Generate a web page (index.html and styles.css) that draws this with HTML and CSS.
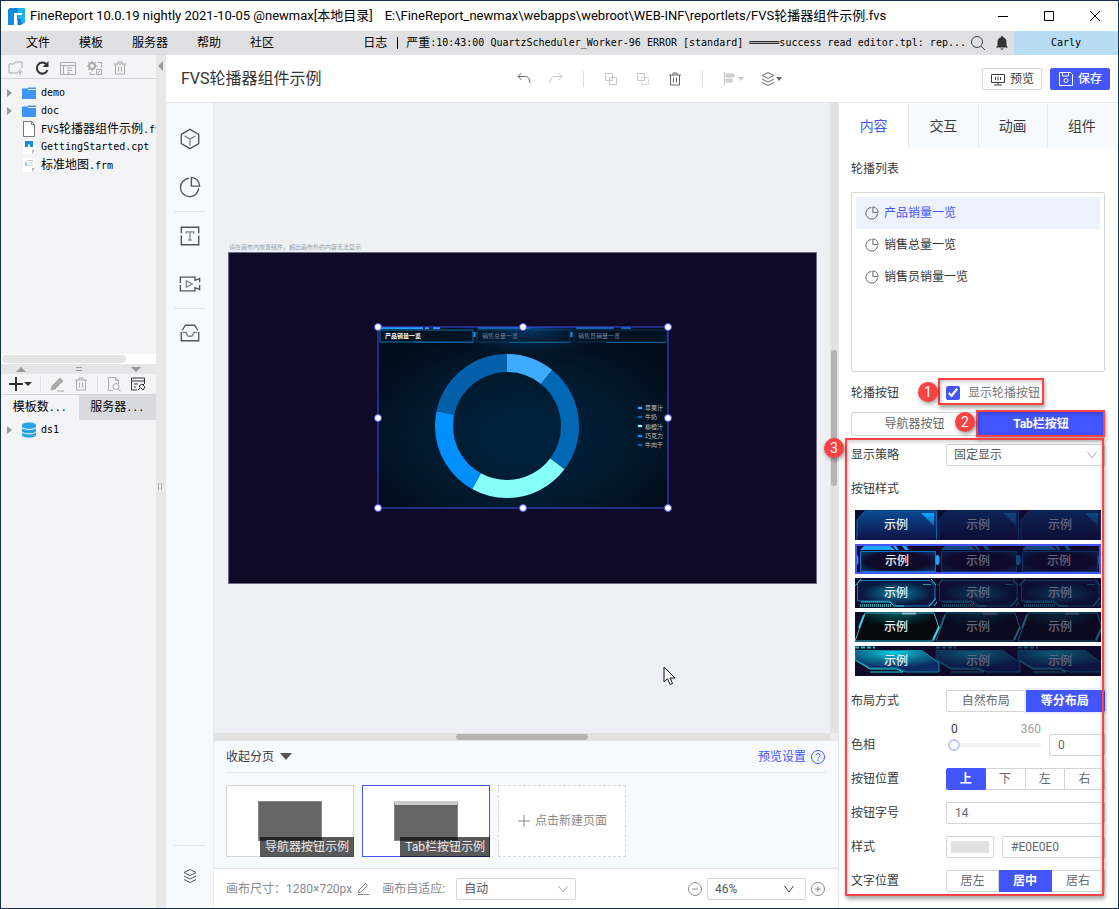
FILE: index.html
```html
<!DOCTYPE html>
<html lang="zh-CN">
<head>
<meta charset="utf-8">
<meta name="viewport" content="width=device-width, initial-scale=1">
<title>FineReport - FVS轮播器组件示例</title>
<link rel="stylesheet" href="styles.css">
</head>
<body>
<svg class="defs" width="0" height="0" aria-hidden="true">
  <defs>
    <linearGradient id="g1" x1="0" y1="0" x2="0" y2="1"><stop offset="0" stop-color="#0a4a92"/><stop offset="1" stop-color="#0d1245"/></linearGradient>
    <linearGradient id="g1t" x1="0" y1="0" x2="0" y2="1"><stop offset="0" stop-color="#0aa5ff"/><stop offset="1" stop-color="#0e60a8"/></linearGradient>
    <radialGradient id="g2" r="0.7"><stop offset="0.6" stop-color="#0f0a2a"/><stop offset="1" stop-color="#0d3d74"/></radialGradient>
    <radialGradient id="g3"><stop offset="0" stop-color="#0a7f9c"/><stop offset="0.9" stop-color="#0a1740"/></radialGradient>
    <radialGradient id="g4" cx="0.5" cy="0"><stop offset="0" stop-color="#02565c"/><stop offset="1" stop-color="#03090c"/></radialGradient>
    <radialGradient id="g5" cx="0.45" cy="0.1" r="0.7"><stop offset="0" stop-color="#06cfe2"/><stop offset="0.5" stop-color="#0a7896"/><stop offset="1" stop-color="#0c2a66"/></radialGradient>
    <radialGradient id="panelglow" cx="0.5" cy="0.6" r="0.6"><stop offset="0" stop-color="#01233f"/><stop offset="0.6" stop-color="#021a2e"/><stop offset="1" stop-color="#020d1c"/></radialGradient>
    <radialGradient id="topglow" cx="0.5" cy="0" r="0.5"><stop offset="0" stop-color="#0a5aa8" stop-opacity="0.8"/><stop offset="1" stop-color="#03233f" stop-opacity="0"/></radialGradient>
    <symbol id="pie" viewBox="0 0 24 24"><path d="M11 2.500A10 10 0 1 0 21.500 13.500M13.500 1.500v9.500h9A9.500 9.500 0 0 0 13.500 1.500z"/></symbol>
    <symbol id="chev" viewBox="0 0 12 8"><path d="M1.500 1L6 7l4.500-6"/></symbol>
    <symbol id="trash" viewBox="0 0 16 16"><path d="M2 4h12M6 4V2h4v2M3.500 4v10h9V4M6.500 6.500v5M9.500 6.500v5"/></symbol>
    <symbol id="layers" viewBox="0 0 16 16"><path d="M8 1.500l6 3-6 3-6-3zM2 8l6 3 6-3M2 11.500l6 3 6-3"/></symbol>
    <symbol id="folder" viewBox="0 0 16 14"><path d="M1 2.500h5l1.500-1H15v11.500H1z" fill="#3d96f7"/><path d="M7 3.500h8" stroke="#fff" fill="none"/></symbol>
    <symbol id="tab1" viewBox="0 0 82 30"><path d="M2 30V10L10 1h71.500v29" fill="url(#g1)" stroke="#0b68b4"/><path d="M66 3h13v13z" fill="url(#g1t)"/></symbol>
    <symbol id="tab2" viewBox="0 0 82 30" overflow="visible"><path d="M5 6l4-4h26l5 4zM38 2h3l3 4h-3zM47 2h4l3 4h-4z" fill="#1aa4ff"/><path d="M5.500 7.500h75v20h-75z" fill="url(#g2)" stroke="#0c73bd"/><ellipse cx="1.500" cy="16" rx="2" ry="5" fill="#1aa4ff"/><ellipse cx="82.500" cy="16" rx="2" ry="5" fill="#1aa4ff"/></symbol>
    <symbol id="tab3" viewBox="0 0 82 30"><path d="M2.500 5.500l3-3H75l5 5V22l-5 6H42l-7-5H2.500z" fill="url(#g3)" stroke="#1080b8"/><path d="M5 27.500h31" stroke="#14a5b0" stroke-width="3" stroke-dasharray="1 1" fill="none"/><path d="M0 8l6-7M76 1l5 6M74 28l7-8M79 28l3-4M6 24h29l4 4h10" stroke="#2fd5da" fill="none"/><path d="M68 6.500h8" stroke="#1c9aa8"/></symbol>
    <symbol id="tab4" viewBox="0 0 84 30" overflow="visible"><path d="M0 29L10 1h69l5 15-6 13z" fill="url(#g4)" stroke="#24c0d0"/><path d="M4 16L9 3M84 15l-6 13" stroke="#39d5de" stroke-width="2" fill="none"/><path d="M47 1.500h14" stroke="#8fb8c8" stroke-width="2"/></symbol>
    <symbol id="tab5" viewBox="0 0 84 30" overflow="visible"><path d="M0 4.500h67L84 17v9H51l-9-4H15L0 13z" fill="url(#g5)" stroke="#0a8da4"/><path d="M0 14l15 9h27l6 3H15" stroke="#1ad6de" fill="none"/><path d="M0 1.500h20" stroke="#16c5cc" stroke-width="2" stroke-dasharray="4 2"/></symbol>
  </defs>
</svg>

<div class="window">
  <header class="titlebar">
    <svg class="logo" viewBox="0 0 17 17"><path d="M2 0h14.500v14.500L13 17H9.500v-5H6v5H0V2z" fill="#0a7fdc"/><path d="M9.500 0H17v15h-4v-4H9.500z" fill="#1fb5e9"/><path d="M6 12V5h8v2H9v5z" fill="#fff"/><path d="M0 4L3 0h3v17H0z" fill="#118ee4"/></svg>
    <span class="app-name">FineReport 10.0.19 nightly 2021-10-05 @newmax[本地目录]</span>
    <span class="app-path">E:\FineReport_newmax\webapps\webroot\WEB-INF\reportlets/FVS轮播器组件示例.fvs</span>
    <div class="win-controls">
      <button aria-label="最小化"><svg viewBox="0 0 12 12"><path d="M1 6.500h10"/></svg></button>
      <button aria-label="最大化"><svg viewBox="0 0 12 12"><path d="M1.500 1.500h9v9h-9z"/></svg></button>
      <button aria-label="关闭"><svg viewBox="0 0 12 12"><path d="M1 1l10 10M11 1L1 11"/></svg></button>
    </div>
  </header>

  <nav class="menubar">
    <div class="menus"><button>文件</button><button>模板</button><button>服务器</button><button>帮助</button><button>社区</button></div>
    <div class="log"><span>日志</span><span class="bar"></span><span>严重</span><span class="mono">:10:43:00 QuartzScheduler_Worker-96 ERROR [standard] ═════success read editor.tpl: rep...</span></div>
    <button class="menu-icon" aria-label="搜索"><svg viewBox="0 0 16 16"><circle cx="7" cy="7" r="5.500"/><path d="M11 11l4 4"/></svg></button>
    <button class="menu-icon" aria-label="通知"><svg viewBox="0 0 16 16"><path d="M8 1c.8 0 1 .6 1 1.200 2.500.6 3.500 2.600 3.500 4.800v3.500L14 12.500H2L3.500 10.500V7c0-2.200 1-4.200 3.500-4.800C7 1.600 7.200 1 8 1zM6 13.500h4L8 15z" fill="#333" stroke="none"/></svg></button>
    <button class="user mono">Carly</button>
  </nav>

  <div class="workspace">
    <aside class="explorer">
      <div class="ex-tools">
        <button aria-label="新建文件夹"><svg viewBox="0 0 16 16"><path d="M10 13H1V4h5l1.500-2H14v6M12 9v6M9 12h6"/></svg></button>
        <button class="dark" aria-label="刷新"><svg viewBox="0 0 16 16"><path d="M12.500 4.500A5.500 5.500 0 1 0 13.500 10" stroke-width="2"/><path d="M14.500 1v6h-6z" fill="#333" stroke="none"/></svg></button>
        <button aria-label="重命名"><svg viewBox="0 0 16 16"><path d="M.5 2.500h15v12H.5zM.5 5.500h15M3.500 5.500v9M7 8h5M7 10.500h5M7 13h3"/></svg></button>
        <button aria-label="设置"><svg viewBox="0 0 16 16"><circle cx="6" cy="6" r="3" stroke-width="2"/><path d="M6 .5v2M6 9.500v2M.5 6h2M9.500 6h2M2 2l1.500 1.500M10 2L8.500 3.500M2 10l1.500-1.500M11.500 2.500h4v5M4 12v2.500h5M10.500 9.500h5v5h-5zM12 13l2-2"/></svg></button>
        <button aria-label="删除"><svg><use href="#trash"/></svg></button>
      </div>
      <ul class="tree files">
        <li class="branch"><i class="tri"></i><svg><use href="#folder"/></svg><span class="mono">demo</span></li>
        <li class="branch"><i class="tri"></i><svg><use href="#folder"/></svg><span class="mono">doc</span></li>
        <li><i></i><svg viewBox="0 0 16 16"><path d="M2.500.5h8l3 3v12h-11zM10.500.5v3h3" fill="#fff" stroke="#777"/></svg><span><span class="mono">FVS</span>轮播器组件示例<span class="mono">.fvs</span></span></li>
        <li><i></i><svg viewBox="0 0 16 16"><path d="M2 1h12v10l-3 4H2z" fill="#fff"/><path d="M11 15v-4h3z" fill="#bbb"/><path d="M4 2h8v6H9V5.500H7V8H4z" fill="#148ee0"/></svg><span class="mono">GettingStarted.cpt</span></li>
        <li><i></i><svg viewBox="0 0 16 16"><path d="M2 1h12v10l-3 4H2z" fill="#fff"/><path d="M11 15v-4h3z" fill="#bbb"/><path d="M5 5v4" stroke="#148ee0"/><path d="M6 3.500h6M7 6h5M7 8.500h5" stroke="#ccc"/></svg><span>标准地图<span class="mono">.frm</span></span></li>
      </ul>
      <div class="ex-scroll"><i></i></div>
      <div class="ex-split"><i class="up"></i><i class="eq"></i><i class="down"></i></div>
      <div class="ex-tools data">
        <button class="dark add" aria-label="添加"><svg viewBox="0 0 16 16"><path d="M8 1v14M1 8h14" stroke-width="2"/></svg><i class="caret"></i></button>
        <span class="vline"></span>
        <button aria-label="编辑"><svg viewBox="0 0 16 16"><path d="M2 14l1-4 8-8 3 3-8 8z" fill="#aaa"/><path d="M8 15h7"/></svg></button>
        <button aria-label="删除数据"><svg><use href="#trash"/></svg></button>
        <span class="vline"></span>
        <button aria-label="预览数据"><svg viewBox="0 0 16 16"><path d="M7 14.500H2.500v-13h7l3 3V8M9.500 1.500v3h3"/><circle cx="10" cy="10.500" r="3"/><path d="M12 13l2.500 2"/></svg></button>
        <button class="dark" aria-label="连接"><svg viewBox="0 0 16 16"><path d="M7 14H1.500V2h13v5M1.500 5h13M4 8h4M4 11h2M8 14l2-2M13 9l2-2M9 10l4 4 2-3-3-3z"/></svg></button>
      </div>
      <div class="ex-tabs"><button class="on">模板数<span class="mono">...</span></button><button>服务器<span class="mono">...</span></button></div>
      <ul class="tree">
        <li class="branch"><i class="tri"></i><svg viewBox="0 0 16 16"><path d="M1 3C1-.5 15-.5 15 3v10c0 3.500-14 3.500-14 0z" fill="#28a5e2"/><path d="M1 5.500c2 2.500 12 2.500 14 0M1 10c2 2.500 12 2.500 14 0" stroke="#fff" fill="none"/></svg><span class="mono">ds1</span></li>
      </ul>
    </aside>
    <div class="gutter"><i class="left"></i><i class="grip"></i></div>

    <main class="designer">
      <header class="doc-head">
        <h1>FVS轮播器组件示例</h1>
        <div class="tools">
          <button class="strong" aria-label="撤销"><svg viewBox="0 0 16 16"><path d="M5.500 2L2 5.500 5.500 9M2 5.500h7.500q4 0 4.500 6.500"/></svg></button>
          <button aria-label="重做"><svg viewBox="0 0 16 16"><path d="M10.500 2L14 5.500 10.500 9M14 5.500H6.500q-4 0-4.500 6.500"/></svg></button>
          <span class="vline"></span>
          <button aria-label="复制"><svg viewBox="0 0 16 16"><path d="M2.500 2.500h7v7h-7zM6.500 6.500h7v7h-7z"/></svg></button>
          <button aria-label="剪切"><svg viewBox="0 0 16 16"><path d="M2.500 2.500h7v7h-7z"/><path d="M6.500 6.500h7v7h-7z" stroke-dasharray="2 1"/></svg></button>
          <button class="strong" aria-label="删除组件"><svg><use href="#trash"/></svg></button>
          <span class="vline"></span>
          <button class="wide" aria-label="对齐"><svg viewBox="0 0 16 16"><path d="M2.500 1v13"/><path d="M4 3h8v3H4zM4 8h6v3H4z" fill="#d6d6d6"/></svg><i class="caret"></i></button>
          <button class="wide strong" aria-label="层级"><svg><use href="#layers"/></svg><i class="caret"></i></button>
        </div>
        <div class="actions">
          <button class="btn"><svg viewBox="0 0 16 16"><path d="M1.500 3.500h13v8h-13zM8 11v2.500M4 14h8M5.500 6v3M8 5.500v4M10.500 6v3"/></svg>预览</button>
          <button class="btn primary"><svg viewBox="0 0 16 16"><path d="M1.500 1.500h11l2 2v11h-13zM4.500 1.500V5h6V1.500"/><circle cx="8" cy="9.500" r="2"/></svg>保存</button>
        </div>
      </header>

      <div class="body">
        <nav class="strip">
          <button aria-label="组件"><svg viewBox="0 0 24 24"><path d="M12 1.500L21.500 7v10L12 22.500 2.500 17V7z"/><path d="M6 8.500l6 3.500 6-3.500M12 12v7" opacity=".7"/></svg></button>
          <button aria-label="图表"><svg><use href="#pie"/></svg></button>
          <hr>
          <button aria-label="文本"><svg viewBox="0 0 24 24"><path d="M2.500 9V2.500h19V9M2.500 11.500v10h19v-10"/><path d="M8 9.500V7.500h8v2M12 7.500v9M10 16.500h4" opacity=".7"/></svg></button>
          <button aria-label="视频"><svg viewBox="0 0 24 24"><path d="M1.500 11V4.500h16V8l5-2v4M1.500 13v6.500h16V16l5 2v-5"/><path d="M8 8.500l6.500 3.500L8 15.500z" opacity=".7"/></svg></button>
          <hr>
          <button aria-label="素材"><svg viewBox="0 0 24 24"><path d="M3.500 9L7 3.500h10L20.500 9M2.500 11v9.500h19V11"/><path d="M4 11.500h4q1 4 2.500 4h3q1.500 0 2.500-4h4" opacity=".7"/></svg></button>
          <hr class="push">
          <button class="small" aria-label="图层"><svg><use href="#layers"/></svg></button>
        </nav>

        <section class="center">
          <div class="viewport">
            <div class="canvas">
              <div class="artboard">
                <span class="hint">请在画布内放置组件，超出画布外的内容无法显示</span>
                <svg class="component" viewBox="0 0 290 182">
                  <path d="M0 0h290v182H0z" fill="url(#panelglow)"/>
                  <path d="M75 0h150v60H75z" fill="url(#topglow)"/>
                  <g fill="#031526" fill-opacity=".7">
                    <path d="M2 3h93v12H2z" stroke="#0a6ea8"/><path d="M99 3h93v12H99z" stroke="#07406a" fill-opacity=".3"/><path d="M196 3h93v12h-93z" stroke="#063354"/>
                  </g>
                  <path d="M3 1h42M47 1h4M55 1h7" stroke="#1ba6ff" stroke-width="2"/><path d="M100 1h40M145 1h6M198 1h38M243 1h10" stroke="#0b67a8" stroke-width="2"/>
                  <path d="M96.500 5v5M193.500 5v5" stroke="#149be6" stroke-width="2"/><path d="M35 15.500h60M132 15.500h60M228 15.500h60" stroke="#0a5d92"/>
                  <g class="ctabs"><text x="7" y="11">产品销量一览</text><text x="104" y="11">销售总量一览</text><text x="200" y="11">销售员销量一览</text></g>
                  <g fill="none" stroke-width="18" transform="rotate(-90 129 99)">
                    <circle cx="129" cy="99" r="63" stroke="#3fabff" pathLength="360" stroke-dasharray="39 321"/>
                    <circle cx="129" cy="99" r="63" stroke="#0068b5" pathLength="360" stroke-dasharray="88 272" stroke-dashoffset="-39"/>
                    <circle cx="129" cy="99" r="63" stroke="#86fff8" pathLength="360" stroke-dasharray="82 278" stroke-dashoffset="-127"/>
                    <circle cx="129" cy="99" r="63" stroke="#008fff" pathLength="360" stroke-dasharray="73 287" stroke-dashoffset="-209"/>
                    <circle cx="129" cy="99" r="63" stroke="#0460ab" pathLength="360" stroke-dasharray="78 282" stroke-dashoffset="-282"/>
                  </g>
                  <g><ellipse cx="262" cy="81" rx="2.500" ry="1.300" fill="#3fabff"/><ellipse cx="262" cy="90" rx="2.500" ry="1.300" fill="#0068b5"/><ellipse cx="262" cy="99" rx="2.500" ry="1.300" fill="#86fff8"/><ellipse cx="262" cy="109" rx="2.500" ry="1.300" fill="#008fff"/><ellipse cx="262" cy="118" rx="2.500" ry="1.300" fill="#0460ab"/></g>
                  <g class="legend"><text x="267" y="83">苹果汁</text><text x="267" y="92">牛奶</text><text x="267" y="102">柳橙汁</text><text x="267" y="111">巧克力</text><text x="267" y="120">牛肉干</text></g>
                  <path d="M0 0h290v181H0z" fill="none" stroke="#3a4ee8"/>
                  <g fill="#fff" stroke="#4350f0"><circle cx="0" cy="0" r="3.500"/><circle cx="145" cy="0" r="3.500"/><circle cx="290" cy="0" r="3.500"/><circle cx="0" cy="91" r="3.500"/><circle cx="290" cy="91" r="3.500"/><circle cx="0" cy="181" r="3.500"/><circle cx="145" cy="181" r="3.500"/><circle cx="290" cy="181" r="3.500"/></g>
                </svg>
              </div>
              <svg class="cursor" viewBox="0 0 13 20"><path d="M1 1v15l3.500-3.300L7 18.500l2.500-1-2.400-5.500H12z" fill="#fff" stroke="#111"/></svg>
            </div>
            <div class="vscroll"><i></i></div>
            <div class="hscroll"><i></i></div>
          </div>
          <div class="pages">
            <div class="pages-head">
              <button class="fold">收起分页<i></i></button>
              <a href="#preview">预览设置<svg viewBox="0 0 16 16"><circle cx="8" cy="8" r="6.500"/><path d="M6 6.500q0-2 2-2t2 2q0 1-1 1.500T8 9.500M8 10.500v1.500"/></svg></a>
            </div>
            <div class="thumbs">
              <button class="thumb"><i></i><span>导航器按钮示例</span></button>
              <button class="thumb on"><i class="tabbed"></i><span>Tab栏按钮示例</span></button>
              <button class="thumb new"><svg viewBox="0 0 14 14"><path d="M7 1v12M1 7h12"/></svg>点击新建页面</button>
            </div>
          </div>
          <footer class="status">
            <span>画布尺寸：1280×720px</span>
            <button class="edit" aria-label="编辑尺寸"><svg viewBox="0 0 14 14"><path d="M2 11l1-3 6.500-6.500 2 2L5 10zM2 12.500h11"/></svg></button>
            <label for="fit">画布自适应:</label>
            <span class="select fit"><select id="fit"><option>自动</option></select><svg><use href="#chev"/></svg></span>
            <div class="zoom">
              <button aria-label="缩小"><svg viewBox="0 0 16 16"><circle cx="8" cy="8" r="6.500"/><path d="M5 8h6"/></svg></button>
              <span class="select dark"><select aria-label="缩放比例"><option>46%</option></select><svg><use href="#chev"/></svg></span>
              <button aria-label="放大"><svg viewBox="0 0 16 16"><circle cx="8" cy="8" r="6.500"/><path d="M5 8h6M8 5v6"/></svg></button>
            </div>
          </footer>
        </section>

        <aside class="props">
          <div class="ptabs"><button class="on">内容</button><button>交互</button><button>动画</button><button>组件</button></div>
          <form class="pform">
            <h2>轮播列表</h2>
            <ul class="list">
              <li class="on"><svg><use href="#pie"/></svg>产品销量一览</li>
              <li><svg><use href="#pie"/></svg>销售总量一览</li>
              <li><svg><use href="#pie"/></svg>销售员销量一览</li>
            </ul>
            <div class="row first"><span>轮播按钮</span><label class="check"><input type="checkbox" checked>显示轮播按钮</label></div>
            <div class="seg kinds"><button type="button">导航器按钮</button><button type="button" class="on">Tab栏按钮</button></div>
            <div class="row strategy"><label for="strategy">显示策略</label><span class="select"><select id="strategy"><option>固定显示</option></select><svg><use href="#chev"/></svg></span></div>
            <h2 class="style-title">按钮样式</h2>
            <div class="styles">
              <button type="button" aria-label="样式一"><svg viewBox="0 0 246 30"><use href="#tab1" width="82" height="30"/><g opacity=".4"><use href="#tab1" x="82" width="82" height="30"/><use href="#tab1" x="164" width="82" height="30"/></g><text x="41" y="19" class="lit">示例</text><text x="123" y="19">示例</text><text x="205" y="19">示例</text></svg></button>
              <button type="button" class="on" aria-label="样式二"><svg viewBox="0 0 246 30"><use href="#tab2" width="82" height="30"/><g opacity=".4"><use href="#tab2" x="81" width="82" height="30"/><use href="#tab2" x="162" width="82" height="30"/></g><text x="42" y="21" class="lit">示例</text><text x="123" y="21">示例</text><text x="204" y="21">示例</text></svg></button>
              <button type="button" aria-label="样式三"><svg viewBox="0 0 246 30"><use href="#tab3" width="82" height="30"/><g opacity=".4"><use href="#tab3" x="82" width="82" height="30"/><use href="#tab3" x="164" width="82" height="30"/></g><text x="41" y="19" class="lit">示例</text><text x="123" y="19">示例</text><text x="205" y="19">示例</text></svg></button>
              <button type="button" aria-label="样式四"><svg viewBox="0 0 246 30"><use href="#tab4" width="84" height="30"/><g opacity=".4"><use href="#tab4" x="81" width="84" height="30"/><use href="#tab4" x="163" width="84" height="30"/></g><text x="41" y="19" class="lit">示例</text><text x="123" y="19">示例</text><text x="205" y="19">示例</text></svg></button>
              <button type="button" aria-label="样式五"><svg viewBox="0 0 246 30"><use href="#tab5" width="84" height="30"/><g opacity=".4"><use href="#tab5" x="81" width="84" height="30"/><use href="#tab5" x="163" width="84" height="30"/></g><text x="41" y="19" class="lit">示例</text><text x="123" y="19">示例</text><text x="205" y="19">示例</text></svg></button>
            </div>
            <div class="row"><span>布局方式</span><div class="seg"><button type="button">自然布局</button><button type="button" class="on halo">等分布局</button></div></div>
            <div class="row hue"><label for="hue">色相</label>
              <div class="hue-box"><div class="slider"><div class="range"><span>0</span><span>360</span></div><input id="hue" type="range" min="0" max="360" value="0"></div><input class="field" type="text" value="0" aria-label="色相值"></div></div>
            <div class="row"><span>按钮位置</span><div class="seg"><button type="button" class="on">上</button><button type="button">下</button><button type="button">左</button><button type="button">右</button></div></div>
            <div class="row"><label for="size">按钮字号</label><input id="size" class="field" type="text" value="14"></div>
            <div class="row"><label for="color">样式</label><div class="color-box"><button type="button" class="swatch" aria-label="选择颜色"><i></i></button><input id="color" class="field" type="text" value="#E0E0E0"></div></div>
            <div class="row"><span>文字位置</span><div class="seg"><button type="button">居左</button><button type="button" class="on">居中</button><button type="button">居右</button></div></div>
          </form>
          <div class="mark box-a"></div><div class="mark box-b"></div><div class="mark box-c"></div>
          <b class="num num-a">1</b><b class="num num-b">2</b><b class="num num-c">3</b>
        </aside>
      </div>
    </main>
  </div>
</div>
</body>
</html>
```
FILE: styles.css
```css
* { box-sizing: border-box; }
body { margin: 0; font-family: Roboto, "Noto Sans CJK SC", sans-serif; font-size: 12px; line-height: 18px; color: #3a3b40; }
button, input, select { font: inherit; color: inherit; }
button { border: 0; padding: 0; margin: 0; background: none; cursor: pointer; white-space: nowrap; }
svg { display: block; width: 16px; height: 16px; fill: none; stroke: currentColor; flex: none; }
text { stroke: none; }
ul { list-style: none; margin: 0; padding: 0; }
h1, h2 { margin: 0; font-weight: 400; }
.defs { position: absolute; width: 0; height: 0; }
.mono { font-family: "DejaVu Sans Mono", "Noto Sans CJK SC", monospace; font-size: 10px; }
.caret { border: 4px solid transparent; border-top-color: currentColor; border-bottom: 0; }
.vline { width: 1px; height: 16px; background: #e0e0e0; }

.window { display: flex; flex-direction: column; min-height: 100vh; border: 1px solid #17304a; background: #fff; }
.titlebar { display: flex; align-items: center; height: 30px; padding-left: 7px; color: #000; font-size: 13px; white-space: nowrap; }
.logo { width: 17px; height: 17px; stroke: none; margin-right: 5px; }
.app-path { margin-left: 12px; }
.win-controls { display: flex; margin-left: auto; }
.win-controls button { display: grid; place-items: center; width: 46px; height: 30px; }
.win-controls svg { width: 12px; height: 12px; }

.menubar { display: flex; height: 24px; background: #e0e0e2; color: #000; align-items: center; }
.menus { display: flex; gap: 29px; padding-left: 25px; }
.log { display: flex; align-items: center; margin-left: auto; white-space: nowrap; }
.bar { width: 1px; height: 12px; background: #000; margin: 0 8px 0 10px; }
.menu-icon { width: 24px; display: grid; place-items: center; color: #444; }
.user { width: 104px; height: 24px; background: #b8dcf1; }

.workspace { display: flex; flex: 1; }
.explorer { width: 155px; display: flex; flex-direction: column; background: #f4f4f7; overflow: hidden; color: #000; }
.ex-tools { display: flex; align-items: center; gap: 10px; height: 24px; padding: 2px 7px 0; border-bottom: 1px solid #d3d3d6; color: #aaa; }
.ex-tools .dark { color: #333; }
.ex-tools.data { height: 21px; padding-top: 0; gap: 8px; }
.ex-tools .add { display: flex; align-items: center; }
.tree { padding: 5px 0 0; }
.tree.files { height: 275px; }
.tree li { display: flex; align-items: center; gap: 4px; height: 18px; padding-left: 6px; white-space: nowrap; }
.tree svg { stroke: none; }
.tree li > i { flex: none; width: 10px; }
.tree li > i.tri { width: 5px; margin-right: 5px; border: 4px solid transparent; border-left: 5px solid #999; border-right: 0; }
.ex-scroll { height: 10px; background: #fff; padding: 1px; }
.ex-scroll i { display: block; width: 124px; height: 8px; border-radius: 4px; background: #e4e4e4; }
.ex-split { display: flex; justify-content: space-between; align-items: center; height: 10px; padding: 0 15px; background: #e5e5e7; }
.ex-split i { border: 5px solid transparent; }
.ex-split .up { border-bottom-color: #999; border-top: 0; }
.ex-split .down { border-top-color: #999; border-bottom: 0; }
.ex-split .eq { width: 6px; height: 4px; border: solid #999; border-width: 1px 0; }
.ex-tabs { display: grid; grid-template-columns: 1fr 1fr; height: 25px; }
.ex-tabs button { background: #d9dade; }
.ex-tabs .on { background: #f4f4f7; }
.ex-tabs + .tree { padding: 1px 0; }
.gutter { display: flex; flex-direction: column; width: 10px; background: #e8e8e8; padding: 6px 2px; }
.gutter .left { border: 5px solid transparent; border-right-color: #999; border-left: 0; width: 5px; }
.gutter .grip { width: 4px; height: 7px; margin-top: 412px; border: solid #aaa; border-width: 0 1px; }

.designer { flex: 1; min-width: 0; display: flex; flex-direction: column; }
.doc-head { display: flex; align-items: center; height: 48px; padding: 0 8px 0 15px; border-bottom: 1px solid #e3e6ec; }
.doc-head h1 { flex: 0 1 335px; font-size: 16px; line-height: 24px; color: #333; white-space: nowrap; }
.tools { display: flex; align-items: center; gap: 16px; color: #c8c8c8; }
.tools .strong { color: #666; }
.tools .vline { margin: 0 3px; }
.wide { display: flex; align-items: center; }
.wide .caret { border-width: 4px 3px 0; }
.actions { display: flex; gap: 8px; margin-left: auto; }
.btn { display: flex; align-items: center; justify-content: center; gap: 4px; width: 60px; height: 22px; border: 1px solid #d4d4d6; border-radius: 2px; }
.primary { background: #4355ff; border-color: #4355ff; color: #fff; font-weight: 500; }

.body { flex: 1; display: flex; }
.strip { display: flex; flex-direction: column; align-items: center; width: 48px; padding: 12px 8px 2px; background: #f6fafd; border-right: 1px solid #e8ecf0; color: #555; }
.strip button { display: grid; place-items: center; height: 48px; width: 32px; }
.strip svg { width: 22px; height: 22px; stroke-width: 1.500; }
.strip hr { width: 31px; margin: 0; border: 0; border-top: 1px solid #e0e4e8; }
.strip .push { margin-top: auto; }
.strip .small { height: 60px; }
.strip .small svg { width: 16px; height: 16px; stroke-width: 1; }
.center { flex: 1; min-width: 0; display: flex; flex-direction: column; }
.viewport { flex: 1; display: grid; grid-template: 1fr 8px / 1fr 8px; background: #ececec; }
.canvas { position: relative; display: grid; align-items: center; padding: 0 13px 0 14px; background: #eff0f5; }
.artboard { position: relative; display: grid; place-items: center; aspect-ratio: 589 / 332; background: #0f0a28; border: 1px solid #6e6d85; }
.hint { position: absolute; left: 0; bottom: 100%; font-size: 6px; line-height: 12px; color: #a0a0a4; }
.component { width: 290px; height: 182px; overflow: visible; stroke: none; }
.ctabs text { font-size: 6px; fill: #77818e; }
.ctabs text:first-child { fill: #fff; font-weight: 700; }
.legend text { font-size: 6px; fill: #b8c0c8; }
.cursor { position: absolute; left: 449px; top: 563px; width: 13px; height: 20px; }
.vscroll { background: #e2e2e2; padding: 247px 1px 0; }
.vscroll i { display: block; height: 136px; border-radius: 3px; background: #b4b4b4; }
.hscroll { background: #e2e2e2; padding: 1px 0; }
.hscroll i { display: block; width: 132px; height: 6px; margin: 0 auto; border-radius: 3px; background: #b4b4b4; }
.pages { background: #f6fafd; padding: 0 12px 11px; border-bottom: 1px solid #e0e4e8; }
.pages-head { display: flex; justify-content: space-between; align-items: center; height: 32px; border-bottom: 1px solid #e3e7eb; }
.fold { display: flex; align-items: center; gap: 6px; }
.fold i { border: 6px solid transparent; border-top: 7px solid #555; border-bottom: 0; }
.pages-head a { display: flex; align-items: center; gap: 4px; color: #4355ff; text-decoration: none; }
.thumbs { display: flex; gap: 8px; padding-top: 12px; }
.thumb { position: relative; display: flex; align-items: center; justify-content: center; width: 128px; height: 72px; background: #fff; border: 1px solid #d4d6d8; }
.thumb.on { border-color: #4355ff; }
.thumb i { width: 64px; height: 40px; background: #666; border: 1px solid #858585; }
.thumb i.tabbed { border-top: 4px solid #ccc; }
.thumb span { position: absolute; right: -1px; bottom: -1px; padding: 1px 5px; color: #e8e8e8; background: rgba(0, 0, 0, .65); }
.thumb.new { border-style: dashed; gap: 4px; color: #8a8a8a; }
.thumb.new svg { width: 14px; height: 14px; }
.status { display: flex; align-items: center; height: 39px; padding: 0 12px; color: #8a8b90; white-space: nowrap; }
.edit { margin: 0 12px 0 4px; }
.edit svg { width: 14px; height: 14px; }
.select { display: grid; grid-template-columns: 1fr 18px; align-items: center; height: 22px; border: 1px solid #d4d4d6; border-radius: 2px; background: #fff; color: #aaa; }
.select select { grid-area: 1 / 1 / 2 / 3; width: 100%; height: 20px; border: 0; padding: 0 7px; background: none; appearance: none; color: #55565a; }
.select svg { grid-area: 1 / 2; width: 12px; height: 8px; pointer-events: none; }
.select.dark { color: #444; width: 99px; grid-template-columns: 1fr 22px; }
.select.fit { width: 120px; margin-left: 11px; }
.zoom { display: flex; align-items: center; gap: 4px; margin-left: auto; }

.props { position: relative; width: 280px; border-left: 1px solid #e3e7eb; background: #fff; }
.ptabs { display: grid; grid-template-columns: repeat(4, 1fr); height: 45px; padding: 1px 2px 0 0; }
.ptabs button { font-size: 14px; background: #f6fafd; border-left: 1px solid #e6eaee; }
.ptabs .on { background: #fff; color: #4355ff; border-left: 0; }
.pform { padding: 10px 13px 16px 12px; display: flex; flex-direction: column; gap: 12px; }
.pform h2 { font-size: 12px; line-height: 22px; }
.list { height: 180px; padding: 4px; border: 1px solid #d6d6d6; border-radius: 2px; }
.list li { display: flex; align-items: center; gap: 5px; height: 32px; padding-left: 9px; color: #333; }
.list svg { width: 14px; height: 14px; color: #555; stroke-width: 1.500; }
.list .on { background: #eef2ff; color: #4355ff; }
.row { display: grid; grid-template-columns: 95px minmax(0, 1fr); align-items: center; min-height: 22px; }
.row.first { margin: -2px 0 -4px; }
.check { display: flex; align-items: center; gap: 8px; color: #77787c; }
.check input { width: 14px; height: 14px; margin: 0; accent-color: #4355ff; }
.seg { display: grid; grid-auto-flow: column; grid-auto-columns: 1fr; height: 22px; color: #66676b; }
.seg button { border: 1px solid #d4d4d6; border-left-width: 0; }
.seg button:first-child { border-left-width: 1px; border-radius: 2px 0 0 2px; }
.seg button:last-child { border-radius: 0 2px 2px 0; }
.seg .on { background: #4355ff; border-color: #4355ff; color: #fff; font-weight: 700; }
.seg .halo { box-shadow: 0 0 0 2px #eef0ff; }
.kinds { height: 24px; }
.strategy { margin-top: -4px; }
.styles { display: grid; gap: 4px; margin: -2px 4px 2px; }
.styles button { background: #0f0a2c; height: 30px; outline: 2px solid transparent; outline-offset: -2px; }
.styles .on { outline-color: #4355ff; }
.styles svg { width: 100%; height: 30px; stroke: none; }
.styles text { font-size: 12px; font-weight: 500; text-anchor: middle; fill: #66647a; }
.styles text.lit { fill: #e8edf2; }
.hue { margin-top: -2px; min-height: 34px; align-items: end; }
.hue label { line-height: 22px; }
.hue-box { display: grid; grid-template-columns: 95px 1fr; gap: 8px; align-items: end; }
.slider { display: flex; flex-direction: column; gap: 4px; }
.range { display: flex; justify-content: space-between; padding-left: 5px; line-height: 12px; }
.range span:last-child { color: #a0a0a0; }
.slider input { appearance: none; width: 100%; height: 12px; margin: 0 0 5px; padding: 0 0 0 2px; background: none; }
.slider input::-webkit-slider-runnable-track { height: 4px; border-radius: 2px; background: #f2f2f3; }
.slider input::-webkit-slider-thumb { appearance: none; width: 12px; height: 12px; margin-top: -4px; border: 2px solid #bcc8ff; border-radius: 50%; background: #fff; }
.field { width: 100%; height: 22px; padding: 0 8px; border: 1px solid #d4d4d6; border-radius: 2px; background: #fff; color: #66676b; }
.color-box { display: grid; grid-template-columns: 48px 1fr; gap: 8px; }
.swatch { height: 22px; padding: 4px; border: 1px solid #d4d4d6; border-radius: 2px; }
.swatch i { display: block; height: 12px; background: #e0e0e0; }

/* tutorial callouts over the panel */
.mark { position: absolute; border: 2px solid #ff4345; box-shadow: 1px 3px 4px rgba(0, 0, 0, .35), inset 1px 2px 4px rgba(0, 0, 0, .2); pointer-events: none; }
.box-a { left: 99px; top: 275px; width: 106px; height: 27px; }
.box-b { left: 137px; top: 307px; width: 129px; height: 27px; }
.box-c { left: 6px; top: 335px; right: 14px; bottom: 12px; }
.num { position: absolute; width: 20px; height: 20px; border-radius: 50%; background: #fa4144; color: #fff; font-size: 14px; font-weight: 400; line-height: 20px; text-align: center; box-shadow: 1px 2px 4px rgba(0, 0, 0, .4); }
.num-a { left: 79px; top: 279px; }
.num-b { left: 116px; top: 309px; }
.num-c { left: -15px; top: 335px; }
```
